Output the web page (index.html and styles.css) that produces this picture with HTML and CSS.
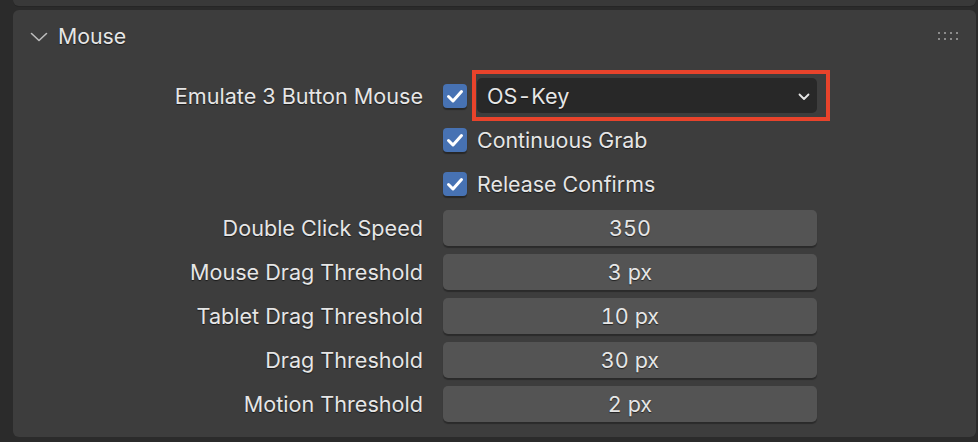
FILE: index.html
```html
<!DOCTYPE html>
<html>
<head>
<meta charset="utf-8">
<link rel="stylesheet" href="styles.css">
</head>
<body>
<div class="prev-panel"></div>
<section class="panel">
  <header class="panel-header">
    <svg class="disclosure" width="18" height="10" viewBox="0 0 18 10"><path d="M1.5 1.5 L9 8.5 L16.5 1.5" fill="none" stroke="#bdbdbd" stroke-width="1.6" stroke-linecap="round" stroke-linejoin="round"/></svg>
    <span class="panel-title">Mouse</span>
    <span class="grip">
      <i></i><i></i><i></i><i></i><i></i><i></i><i></i><i></i>
    </span>
  </header>
  <div class="props">
    <div class="row">
      <div class="label">Emulate 3 Button Mouse</div>
      <div class="control">
        <span class="checkbox"><svg viewBox="0 0 24 24" width="24" height="24"><path d="M5.5 12.5 L10 17 L18.5 7.5" fill="none" stroke="#fff" stroke-width="3" stroke-linecap="round" stroke-linejoin="round"/></svg></span>
        <div class="dropdown-wrap">
          <div class="dropdown">
            <span>OS<span class="hy">-</span>Key</span>
            <svg width="12" height="8" viewBox="0 0 12 8"><path d="M1.5 1.5 L6 6 L10.5 1.5" fill="none" stroke="#e6e6e6" stroke-width="1.8" stroke-linecap="round" stroke-linejoin="round"/></svg>
          </div>
          <div class="highlight"></div>
        </div>
      </div>
    </div>
    <div class="row">
      <div class="label"></div>
      <div class="control">
        <span class="checkbox"><svg viewBox="0 0 24 24" width="24" height="24"><path d="M5.5 12.5 L10 17 L18.5 7.5" fill="none" stroke="#fff" stroke-width="3" stroke-linecap="round" stroke-linejoin="round"/></svg></span>
        <span class="check-text">Continuous Grab</span>
      </div>
    </div>
    <div class="row">
      <div class="label"></div>
      <div class="control">
        <span class="checkbox"><svg viewBox="0 0 24 24" width="24" height="24"><path d="M5.5 12.5 L10 17 L18.5 7.5" fill="none" stroke="#fff" stroke-width="3" stroke-linecap="round" stroke-linejoin="round"/></svg></span>
        <span class="check-text">Release Confirms</span>
      </div>
    </div>
    <div class="row">
      <div class="label">Double Click Speed</div>
      <div class="control"><div class="field">350</div></div>
    </div>
    <div class="row">
      <div class="label">Mouse Drag Threshold</div>
      <div class="control"><div class="field">3 px</div></div>
    </div>
    <div class="row">
      <div class="label">Tablet Drag Threshold</div>
      <div class="control"><div class="field">10 px</div></div>
    </div>
    <div class="row">
      <div class="label">Drag Threshold</div>
      <div class="control"><div class="field">30 px</div></div>
    </div>
    <div class="row">
      <div class="label">Motion Threshold</div>
      <div class="control"><div class="field">2 px</div></div>
    </div>
  </div>
</section>
</body>
</html>
```
FILE: styles.css
```css
html, body {
  margin: 0;
  padding: 0;
  background: #2b2b2b;
  width: 978px;
  height: 442px;
  overflow: hidden;
  font-family: Inter, "Noto Sans", sans-serif;
  color: #e6e6e6;
}

.prev-panel {
  margin-left: 13px;
  width: 963px;
  height: 6px;
  background: #393939;
  border-radius: 0 0 6px 6px;
  box-shadow: 0 1px 0 #262626;
}

.panel {
  margin: 4px 0 0 13px;
  width: 963px;
  height: 427px;
  background: #3d3d3d;
  border-radius: 6px;
  box-sizing: border-box;
}

.panel-header {
  height: 52px;
  display: flex;
  align-items: center;
  padding-left: 17px;
  padding-right: 16px;
}

.disclosure {
  display: block;
  margin-top: 1px;
}

.panel-title {
  margin-left: 10px;
  font-size: 21.3px;
  text-shadow: 0 1px 1px rgba(0,0,0,0.6);
}

.grip {
  margin-left: auto;
  display: grid;
  grid-template-columns: repeat(4, 2px);
  grid-template-rows: repeat(2, 2px);
  gap: 4px 4px;
  margin-right: 2px;
}
.grip i {
  display: block;
  width: 2px;
  height: 2px;
  background: #8c8c8c;
}

.props {
  padding-top: 16px;
  display: flex;
  flex-direction: column;
  gap: 8px;
}

.row {
  display: grid;
  grid-template-columns: 410px 374px;
  column-gap: 20px;
  height: 36px;
  align-items: center;
}

.label {
  text-align: right;
  font-size: 21.6px;
  text-shadow: 0 1px 1px rgba(0,0,0,0.6);
  white-space: nowrap;
}

.control {
  display: flex;
  align-items: center;
  height: 36px;
}

.checkbox {
  width: 24px;
  height: 24px;
  border-radius: 4px;
  background: #4772b3;
  box-shadow: 0 2px 1px rgba(0,0,0,0.35);
  flex: none;
  display: block;
}
.checkbox svg { display: block; }

.check-text {
  margin-left: 10px;
  font-size: 21.4px;
  text-shadow: 0 1px 1px rgba(0,0,0,0.6);
  white-space: nowrap;
}

.dropdown-wrap {
  position: relative;
  margin-left: 10px;
  flex: 1;
  height: 35px;
  align-self: flex-start;
}

.dropdown {
  height: 35px;
  background: #282828;
  border-radius: 5px;
  display: flex;
  align-items: center;
  justify-content: space-between;
  padding: 0 7px 0 10px;
  font-size: 21.6px;
  text-shadow: 0 1px 1px rgba(0,0,0,0.6);
}
.dropdown svg { display: block; margin-top: 2px; }
.hy { margin: 0 2px; }

.highlight {
  position: absolute;
  left: -5px;
  top: -8px;
  right: -13px;
  bottom: -8px;
  border: 4px solid #e8432b;
  box-sizing: border-box;
  pointer-events: none;
}

.field {
  width: 100%;
  height: 36px;
  background: #545454;
  border-radius: 5px;
  box-shadow: 0 2px 1px rgba(0,0,0,0.3);
  display: flex;
  align-items: center;
  justify-content: center;
  font-size: 21.6px;
  font-variant-numeric: tabular-nums;
  text-shadow: 0 1px 1px rgba(0,0,0,0.6);
}
```
